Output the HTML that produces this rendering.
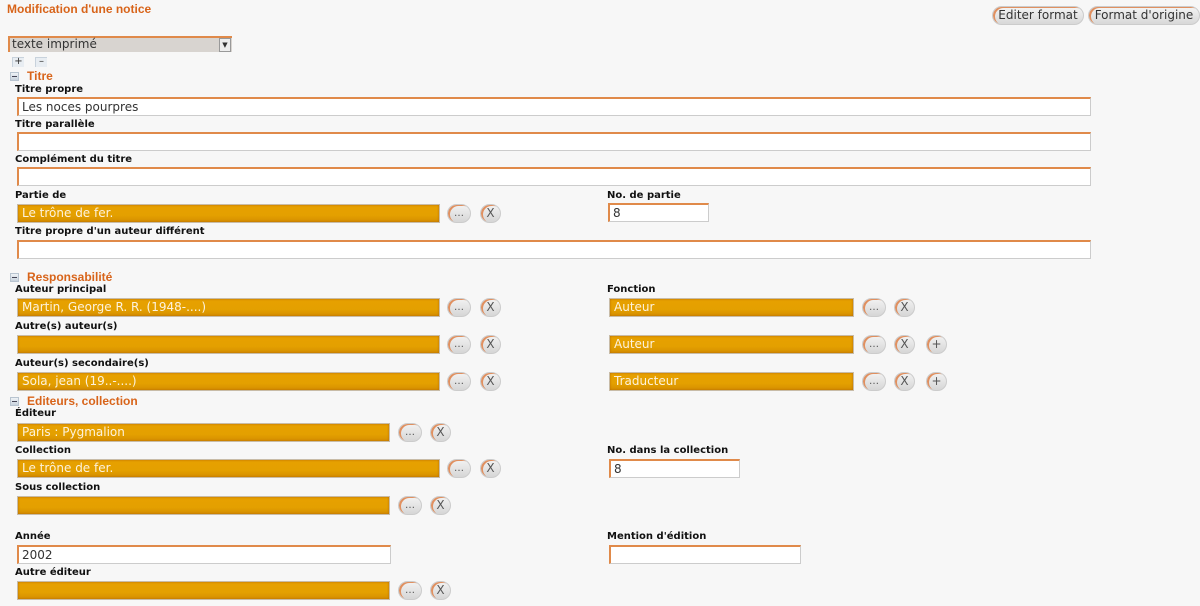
<!DOCTYPE html>
<html><head><meta charset="utf-8"><style>
body{margin:0;width:1200px;height:606px;background:#f7f7f7;font-family:"DejaVu Sans","Liberation Sans",sans-serif;position:relative;overflow:hidden}
.a{position:absolute}
h1{position:absolute;left:7px;top:2px;margin:0;font:bold 12px "Liberation Sans",sans-serif;color:#d8641a}
.sec{position:absolute;left:27px;font:bold 12px "Liberation Sans",sans-serif;color:#d8641a}
.mi{position:absolute;left:10px;width:9px;height:9px;background:linear-gradient(#eef2f6,#c8d2dc);border:1px solid #b8c4d0;box-sizing:border-box}
.mi:after{content:"";position:absolute;left:1px;right:1px;top:3px;height:1px;background:#445}
.l{position:absolute;left:15px;font:bold 10px "DejaVu Sans",sans-serif;color:#111}
.w{position:absolute;height:19px;box-sizing:border-box;background:#fff;border:1px solid #ccc;border-left:2px solid #e08a4a;border-top:2px solid #e08a4a;font-size:12px;color:#333;padding:1px 0 0 3px;line-height:15px}
.o{position:absolute;height:19px;box-sizing:border-box;background:linear-gradient(#e7a100,#e4a000 60%,#d58f00);border:1px solid #c8bca8;box-shadow:inset 0 0 2px #b86a00;font-size:12px;color:#fdf2dc;padding:1px 0 0 4px;line-height:15px}
.b{position:absolute;height:19px;width:24px;box-sizing:border-box;border-radius:10px;background:linear-gradient(#f2f2f2,#d6d6d6);border:1px solid #ccc;box-shadow:inset 2px 1px 0 #e09060;font-size:10px;color:#555;text-align:center;line-height:17px}
.x{width:21px;font-size:12px}
.btn{position:absolute;top:6px;height:19px;box-sizing:border-box;border-radius:10px;background:linear-gradient(#f4f4f4,#d8d8d8);border:1px solid #ccc;box-shadow:inset 2px 1px 0 #e09060;font-size:12px;color:#333;line-height:16px;white-space:nowrap;text-align:center;padding:0}
.pm{position:absolute;top:57px;width:11px;height:9px;font-size:10px;line-height:8px;color:#333;text-align:center;border-top:1px solid #c8d2dc;border-left:1px solid #c8d2dc;background:#e8edf2}
</style></head><body>
<h1>Modification d'une notice</h1>
<div class="btn" style="left:992px;width:92px">Editer format</div>
<div class="btn" style="left:1088px;width:112px">Format d'origine</div>
<div class="a" style="left:8px;top:36px;width:224px;height:16px;box-sizing:border-box;background:#d8d4d0;border-top:2px solid #e08a4a;border-left:2px solid #e08a4a;font-size:12px;color:#333;line-height:13px;padding-left:2px">texte imprimé<span class="a" style="right:1px;top:0;width:10px;height:12px;background:#eee;border:1px solid #999;font-size:7px;line-height:12px;text-align:center">▼</span></div>
<div class="pm" style="left:12px">+</div>
<div class="pm" style="left:35px">–</div>
<div class="mi" style="top:72px"></div><div class="sec" style="top:69px">Titre</div>
<div class="l" style="top:84px">Titre propre</div>
<div class="w" style="left:17px;top:97px;width:1074px">Les noces pourpres</div>
<div class="l" style="top:119px">Titre parallèle</div>
<div class="w" style="left:17px;top:132px;width:1074px"></div>
<div class="l" style="top:154px">Complément du titre</div>
<div class="w" style="left:17px;top:167px;width:1074px"></div>
<div class="l" style="top:190px">Partie de</div>
<div class="o" style="left:17px;top:204px;width:423px">Le trône de fer.</div>
<div class="b" style="left:447px;top:204px">…</div><div class="b x" style="left:480px;top:204px">X</div>
<div class="l" style="left:607px;top:190px">No. de partie</div>
<div class="w" style="left:608px;top:203px;width:101px">8</div>
<div class="l" style="top:226px">Titre propre d'un auteur différent</div>
<div class="w" style="left:17px;top:240px;width:1074px"></div>
<div class="mi" style="top:273px"></div><div class="sec" style="top:270px">Responsabilité</div>
<div class="l" style="top:284px">Auteur principal</div>
<div class="o" style="left:17px;top:298px;width:423px">Martin, George R. R. (1948-....)</div>
<div class="b" style="left:447px;top:298px">…</div><div class="b x" style="left:480px;top:298px">X</div>
<div class="l" style="left:607px;top:284px">Fonction</div>
<div class="o" style="left:609px;top:298px;width:245px">Auteur</div>
<div class="b" style="left:862px;top:298px">…</div><div class="b x" style="left:894px;top:298px">X</div>
<div class="l" style="top:321px">Autre(s) auteur(s)</div>
<div class="o" style="left:17px;top:335px;width:423px"></div>
<div class="b" style="left:447px;top:335px">…</div><div class="b x" style="left:480px;top:335px">X</div>
<div class="o" style="left:609px;top:335px;width:245px">Auteur</div>
<div class="b" style="left:862px;top:335px">…</div><div class="b x" style="left:894px;top:335px">X</div><div class="b x" style="left:926px;top:335px">+</div>
<div class="l" style="top:358px">Auteur(s) secondaire(s)</div>
<div class="o" style="left:17px;top:372px;width:423px">Sola, jean (19..-....)</div>
<div class="b" style="left:447px;top:372px">…</div><div class="b x" style="left:480px;top:372px">X</div>
<div class="o" style="left:609px;top:372px;width:245px">Traducteur</div>
<div class="b" style="left:862px;top:372px">…</div><div class="b x" style="left:894px;top:372px">X</div><div class="b x" style="left:926px;top:372px">+</div>
<div class="mi" style="top:397px"></div><div class="sec" style="top:394px">Editeurs, collection</div>
<div class="l" style="top:408px">Éditeur</div>
<div class="o" style="left:17px;top:423px;width:373px">Paris : Pygmalion</div>
<div class="b" style="left:398px;top:423px">…</div><div class="b x" style="left:430px;top:423px">X</div>
<div class="l" style="top:445px">Collection</div>
<div class="o" style="left:17px;top:459px;width:423px">Le trône de fer.</div>
<div class="b" style="left:447px;top:459px">…</div><div class="b x" style="left:480px;top:459px">X</div>
<div class="l" style="left:607px;top:445px">No. dans la collection</div>
<div class="w" style="left:609px;top:459px;width:131px">8</div>
<div class="l" style="top:482px">Sous collection</div>
<div class="o" style="left:17px;top:496px;width:373px"></div>
<div class="b" style="left:398px;top:496px">…</div><div class="b x" style="left:430px;top:496px">X</div>
<div class="l" style="top:531px">Année</div>
<div class="w" style="left:17px;top:545px;width:374px">2002</div>
<div class="l" style="left:607px;top:531px">Mention d'édition</div>
<div class="w" style="left:609px;top:545px;width:192px"></div>
<div class="l" style="top:567px">Autre éditeur</div>
<div class="o" style="left:17px;top:581px;width:373px"></div>
<div class="b" style="left:398px;top:581px">…</div><div class="b x" style="left:430px;top:581px">X</div>
</body></html>
